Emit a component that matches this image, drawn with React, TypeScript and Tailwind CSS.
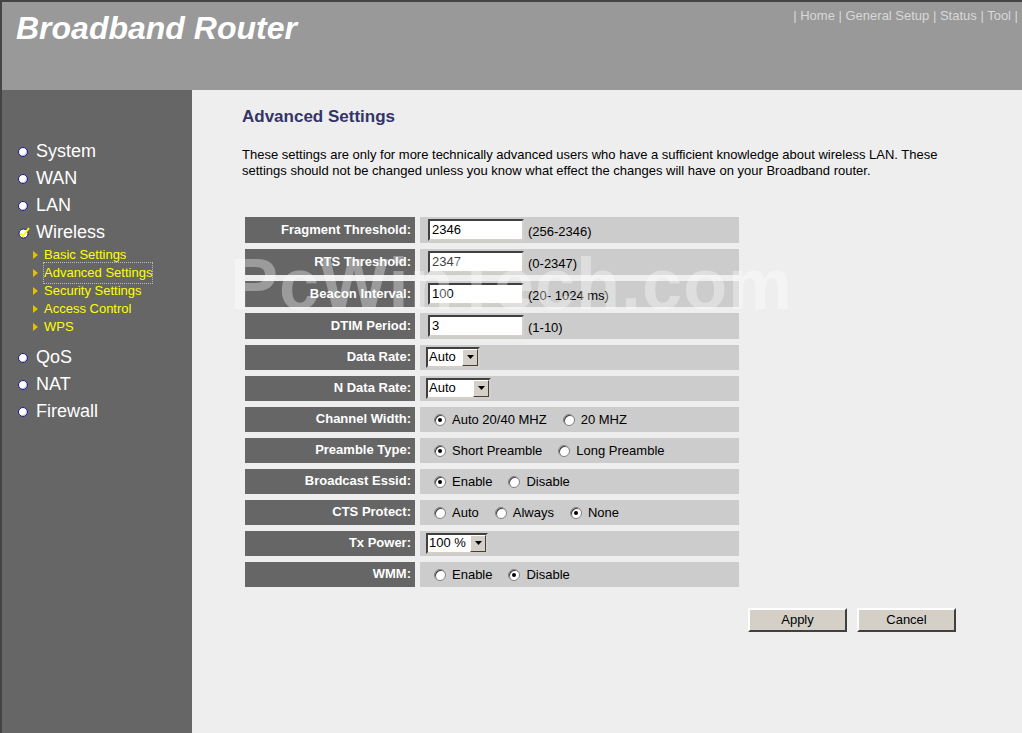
import React from "react";

const navTop = ["System", "WAN", "LAN"];
const navBottom = ["QoS", "NAT", "Firewall"];
const subItems = ["Basic Settings", "Advanced Settings", "Security Settings", "Access Control", "WPS"];

function Bullet() {
  return <span className="inline-block h-[10px] w-[10px] rounded-full border border-[#1a1a8a] bg-white shadow-[inset_-1px_-1px_0_#c8c8e8]" />;
}

function Check() {
  return (
    <svg width="12" height="12" viewBox="0 0 12 12">
      <circle cx="5.5" cy="6.5" r="4.5" fill="#fff" stroke="#1a1a8a" />
      <path d="M2.5 6.5 L5 9 L11 1" fill="none" stroke="#ffff00" strokeWidth="2" />
    </svg>
  );
}

function Radio({ on }: { on?: boolean }) {
  return (
    <span className="mr-[6px] inline-flex h-[12px] w-[12px] items-center justify-center rounded-full border border-[#808080] bg-white shadow-[inset_1px_1px_0_#404040]">
      {on && <span className="h-[4px] w-[4px] rounded-full bg-black" />}
    </span>
  );
}

function TextBox({ value, dim }: { value: string; dim?: boolean }) {
  return (
    <div className="ml-[2px] flex h-[22px] w-[96px] items-center border-2 border-t-[#404040] border-l-[#404040] border-b-[#d4d0c8] border-r-[#d4d0c8] bg-white pl-[2px] text-[13px] text-black">
      <span className={dim ? "text-[#444]" : ""}>{value}</span>
    </div>
  );
}

function Select({ value, w }: { value: string; w: string }) {
  return (
    <div className={`flex h-[21px] items-center justify-between border-2 border-t-[#404040] border-l-[#404040] border-b-[#d4d0c8] border-r-[#d4d0c8] bg-white text-[13px] text-black ${w}`}>
      <span className="pl-[1px]">{value}</span>
      <span className="flex h-[17px] w-[16px] items-center justify-center border border-t-white border-l-white border-b-[#404040] border-r-[#404040] bg-[#d4d0c8]">
        <svg width="7" height="4" viewBox="0 0 7 4">
          <path d="M0 0 H7 L3.5 4 Z" fill="#000" />
        </svg>
      </span>
    </div>
  );
}

function Radios({ items, on }: { items: string[]; on: number }) {
  return (
    <div className="flex items-center pl-[8px] pt-[2px] text-[13px] text-black">
      {items.map((t, i) => (
        <span key={t} className="mr-[16px] inline-flex items-center">
          <Radio on={i === on} />
          {t}
        </span>
      ))}
    </div>
  );
}

function Row({ label, tall, children }: { label: string; tall?: boolean; children: React.ReactNode }) {
  return (
    <div className={`flex gap-[5px] ${tall ? "h-[26px]" : "h-[25px]"}`}>
      <div className="flex w-[170px] items-center justify-end bg-[#666666] pr-[4px] text-[13px] font-bold text-white">{label}</div>
      <div className="flex flex-1 items-center bg-[#cccccc] pl-[6px]">{children}</div>
    </div>
  );
}

function Range({ t }: { t: string }) {
  return <span className="ml-[4px] mt-[4px] text-[13px] text-black">{t}</span>;
}

function Button({ label }: { label: string }) {
  return (
    <button className="h-[24px] w-[99px] border-2 border-t-white border-l-white border-b-[#404040] border-r-[#404040] bg-[#d4d0c8] text-[13px] text-black">
      {label}
    </button>
  );
}

export default function App() {
  return (
    <div className="relative flex h-[733px] w-[1022px] flex-col overflow-hidden bg-[#eeeeee] font-['Liberation_Sans',Arial,sans-serif]">
      <header className="flex h-[90px] shrink-0 justify-between border-l-2 border-t-2 border-[#444444] bg-[#999999]">
        <div className="pl-[14px] pt-[2px] text-[32px] font-bold italic text-white">Broadband Router</div>
        <div className="pr-[4px] pt-[4px] text-[13px] text-[#d8d8d8]">
          | Home | General Setup | Status | Tool |
        </div>
      </header>
      <div className="flex flex-1">
        <aside className="w-[192px] shrink-0 border-l-2 border-[#444444] bg-[#666666] pl-[16px] pt-[48px]">
          {navTop.map(n => (
            <div key={n} className="flex h-[27px] items-center gap-[8px] text-[18px] text-white">
              <Bullet />
              {n}
            </div>
          ))}
          <div className="flex h-[27px] items-center gap-[6px] text-[18px] text-white">
            <Check />
            Wireless
          </div>
          <div className="pb-[8px] pl-[15px]">
            {subItems.map(s => (
              <div key={s} className="flex h-[18px] items-center gap-[6px] text-[13px] text-[#ffff00]">
                <svg width="5" height="8" viewBox="0 0 5 8">
                  <path d="M0 0 L5 4 L0 8 Z" fill="#e6c000" />
                </svg>
                <span className={s === "Advanced Settings" ? "outline outline-1 outline-dotted outline-[#bbbbbb]" : ""}>{s}</span>
              </div>
            ))}
          </div>
          {navBottom.map(n => (
            <div key={n} className="flex h-[27px] items-center gap-[8px] text-[18px] text-white">
              <Bullet />
              {n}
            </div>
          ))}
        </aside>
        <main className="flex-1 pl-[50px] pt-[14px]">
          <h1 className="text-[17px] font-bold text-[#343468]">Advanced Settings</h1>
          <p className="mt-[17px] text-[13px] leading-[16px] text-black">
            These settings are only for more technically advanced users who have a sufficient knowledge about wireless LAN. These
            <br />
            settings should not be changed unless you know what effect the changes will have on your Broadband router.
          </p>
          <div className="ml-[3px] mt-[38px] flex w-[494px] flex-col gap-[6px]">
            <Row label="Fragment Threshold:" tall>
              <TextBox value="2346" />
              <Range t="(256-2346)" />
            </Row>
            <Row label="RTS Threshold:" tall>
              <TextBox value="2347" dim />
              <Range t="(0-2347)" />
            </Row>
            <Row label="Beacon Interval:" tall>
              <TextBox value="100" />
              <Range t="(20- 1024 ms)" />
            </Row>
            <Row label="DTIM Period:" tall>
              <TextBox value="3" />
              <Range t="(1-10)" />
            </Row>
            <Row label="Data Rate:">
              <Select value="Auto" w="w-[54px]" />
            </Row>
            <Row label="N Data Rate:">
              <Select value="Auto" w="w-[65px]" />
            </Row>
            <Row label="Channel Width:">
              <Radios items={["Auto 20/40 MHZ", "20 MHZ"]} on={0} />
            </Row>
            <Row label="Preamble Type:">
              <Radios items={["Short Preamble", "Long Preamble"]} on={0} />
            </Row>
            <Row label="Broadcast Essid:">
              <Radios items={["Enable", "Disable"]} on={0} />
            </Row>
            <Row label="CTS Protect:">
              <Radios items={["Auto", "Always", "None"]} on={2} />
            </Row>
            <Row label="Tx Power:">
              <Select value="100 %" w="w-[62px]" />
            </Row>
            <Row label="WMM:">
              <Radios items={["Enable", "Disable"]} on={1} />
            </Row>
          </div>
          <div className="ml-[506px] mt-[21px] flex gap-[10px]">
            <Button label="Apply" />
            <Button label="Cancel" />
          </div>
        </main>
      </div>
      <div className="pointer-events-none absolute left-[230px] top-[230px] text-[72px] font-bold tracking-[1px] text-white/35">
        PcWinTech.com
      </div>
    </div>
  );
}
